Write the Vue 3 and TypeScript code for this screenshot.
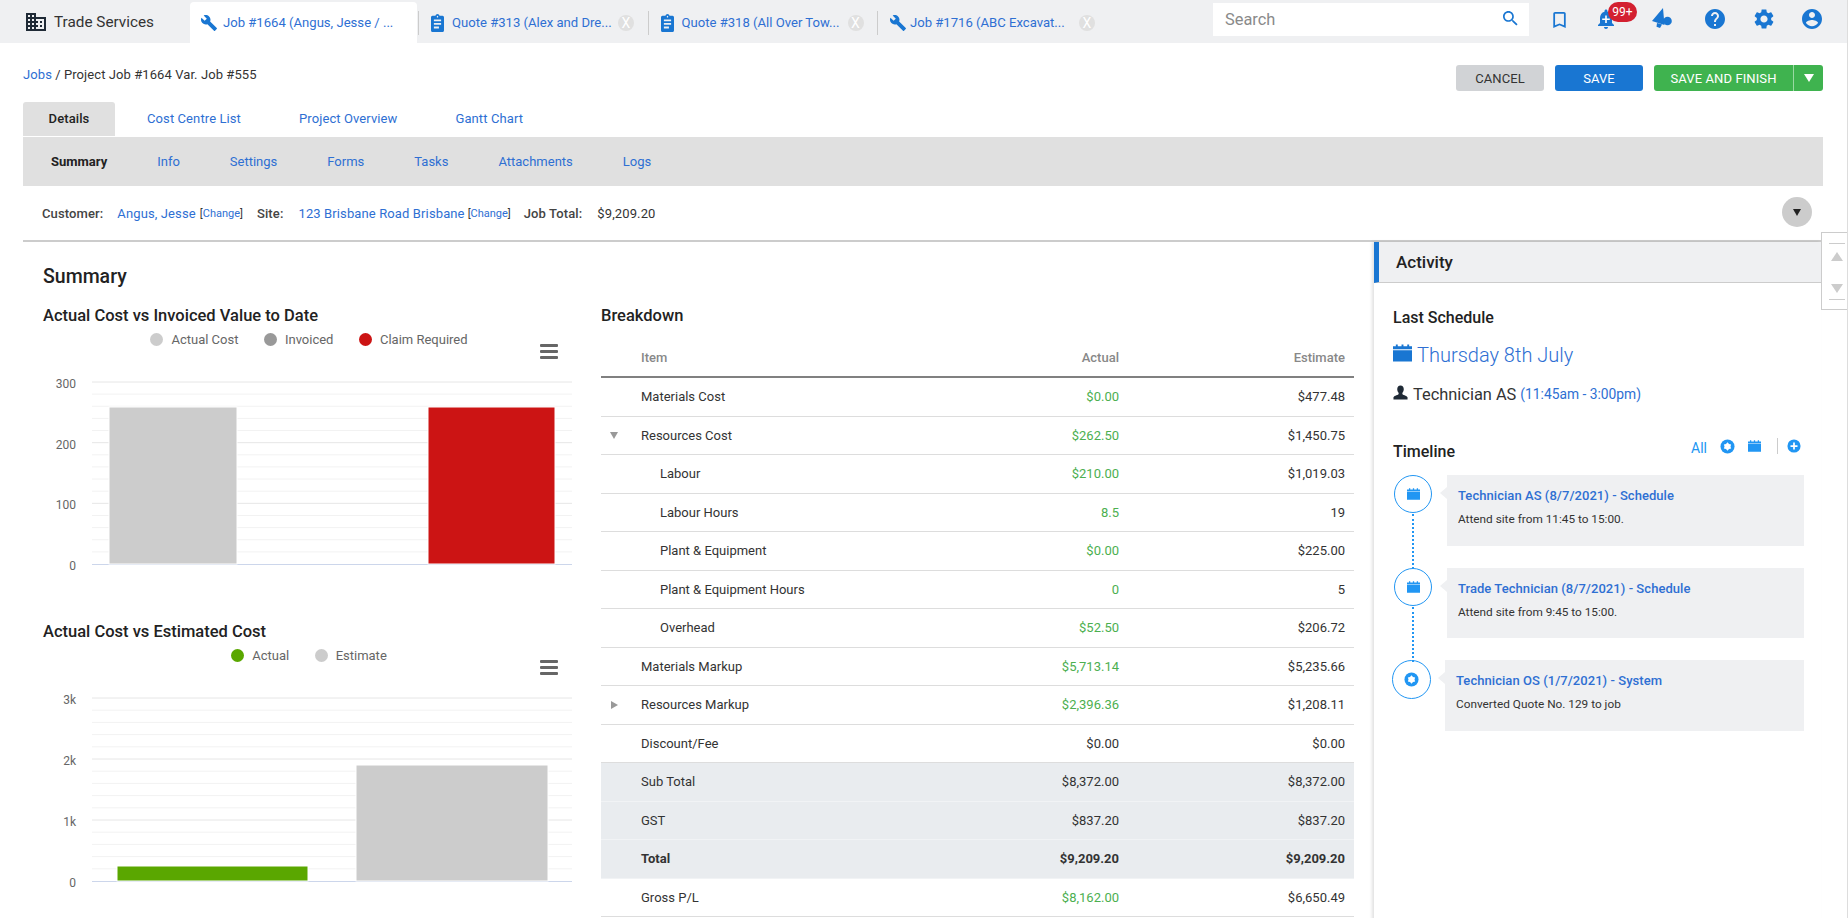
<script setup lang="ts">
interface BreakdownRow {
  name: string
  actual: string
  estimate: string
  green?: boolean
  child?: boolean
  caret?: 'down' | 'right'
  shaded?: boolean
  bold?: boolean
}

interface Bar {
  x: number
  w: number
  y: number
  color: string
}

interface Chart {
  title: string
  legend: { label: string; color: string }[]
  ticks: string[]
  bars: Bar[]
  bottom: number
}

const tabs = [
  { kind: 'job', label: 'Job #1664 (Angus, Jesse / ...', active: true },
  { kind: 'quote', label: 'Quote #313 (Alex and Dre...', active: false },
  { kind: 'quote', label: 'Quote #318 (All Over Tow...', active: false },
  { kind: 'job', label: 'Job #1716 (ABC Excavat...', active: false }
]

const subTabs = ['Info', 'Settings', 'Forms', 'Tasks', 'Attachments', 'Logs']

const charts: Chart[] = [
  {
    title: 'Actual Cost vs Invoiced Value to Date',
    legend: [
      { label: 'Actual Cost', color: '#cccccc' },
      { label: 'Invoiced', color: '#999999' },
      { label: 'Claim Required', color: '#cc1414' }
    ],
    ticks: ['300', '200', '100', '0'],
    bars: [
      { x: 66, w: 128, y: 56, color: '#cccccc' },
      { x: 385, w: 127, y: 56, color: '#cc1414' }
    ],
    bottom: 213
  },
  {
    title: 'Actual Cost vs Estimated Cost',
    legend: [
      { label: 'Actual', color: '#5aa700' },
      { label: 'Estimate', color: '#cccccc' }
    ],
    ticks: ['3k', '2k', '1k', '0'],
    bars: [
      { x: 74, w: 191, y: 199, color: '#5aa700' },
      { x: 313, w: 192, y: 98, color: '#cccccc' }
    ],
    bottom: 214
  }
]

const rows: BreakdownRow[] = [
  { name: 'Materials Cost', actual: '$0.00', estimate: '$477.48', green: true },
  { name: 'Resources Cost', actual: '$262.50', estimate: '$1,450.75', green: true, caret: 'down' },
  { name: 'Labour', actual: '$210.00', estimate: '$1,019.03', green: true, child: true },
  { name: 'Labour Hours', actual: '8.5', estimate: '19', green: true, child: true },
  { name: 'Plant & Equipment', actual: '$0.00', estimate: '$225.00', green: true, child: true },
  { name: 'Plant & Equipment Hours', actual: '0', estimate: '5', green: true, child: true },
  { name: 'Overhead', actual: '$52.50', estimate: '$206.72', green: true, child: true },
  { name: 'Materials Markup', actual: '$5,713.14', estimate: '$5,235.66', green: true },
  { name: 'Resources Markup', actual: '$2,396.36', estimate: '$1,208.11', green: true, caret: 'right' },
  { name: 'Discount/Fee', actual: '$0.00', estimate: '$0.00' },
  { name: 'Sub Total', actual: '$8,372.00', estimate: '$8,372.00', shaded: true },
  { name: 'GST', actual: '$837.20', estimate: '$837.20', shaded: true },
  { name: 'Total', actual: '$9,209.20', estimate: '$9,209.20', shaded: true, bold: true },
  { name: 'Gross P/L', actual: '$8,162.00', estimate: '$6,650.49', green: true }
]

const timeline = [
  { kind: 'schedule', title: 'Technician AS (8/7/2021) - Schedule', body: 'Attend site from 11:45 to 15:00.' },
  { kind: 'schedule', title: 'Trade Technician (8/7/2021) - Schedule', body: 'Attend site from 9:45 to 15:00.' },
  { kind: 'system', title: 'Technician OS (1/7/2021) - System', body: 'Converted Quote No. 129 to job' }
]

const gridLines = (bottom: number) => {
  const step = (bottom - 31) / 15
  return Array.from({ length: 15 }, (_, i) => ({ y: 31 + i * step, major: i % 5 === 0 }))
}

const tickY = (i: number, bottom: number) => 31 + ((bottom - 31) / 3) * i
</script>

<template>
  <div class="page">
    <header class="topbar">
      <div class="brand">
        <svg class="brand-icon" viewBox="2 3 20 18">
          <path fill="#1f2a36" d="M12 7V3H2v18h20V7H12zM6 19H4v-2h2v2zm0-4H4v-2h2v2zm0-4H4V9h2v2zm0-4H4V5h2v2zm4 12H8v-2h2v2zm0-4H8v-2h2v2zm0-4H8V9h2v2zm0-4H8V5h2v2zm10 12h-8v-2h2v-2h-2v-2h2v-2h-2V9h8v10zm-2-8h-2v2h2v-2zm0 4h-2v2h2v-2z" />
        </svg>
        <span>Trade Services</span>
      </div>
      <nav class="tabs">
        <div v-for="tab in tabs" :key="tab.label" class="tab" :class="{ active: tab.active }">
          <svg v-if="tab.kind === 'job'" class="tab-icon" viewBox="1 1 22 22">
            <path fill="#1976d2" d="M22.7 19l-9.1-9.1c.9-2.3.4-5-1.5-6.9-2-2-5-2.4-7.4-1.3L9 6 6 9 1.6 4.7C.4 7.1.9 10.1 2.9 12.1c1.9 1.9 4.6 2.4 6.9 1.5l9.1 9.1c.4.4 1 .4 1.4 0l2.3-2.3c.5-.4.5-1.1.1-1.4z" />
          </svg>
          <svg v-else class="tab-icon quote" viewBox="3 1 18 20" preserveAspectRatio="none">
            <path fill="#1976d2" d="M19 3h-4.18C14.4 1.84 13.3 1 12 1c-1.3 0-2.4.84-2.82 2H5c-1.1 0-2 .9-2 2v14c0 1.1.9 2 2 2h14c1.1 0 2-.9 2-2V5c0-1.1-.9-2-2-2zm-7 0c.55 0 1 .45 1 1s-.45 1-1 1-1-.45-1-1 .45-1 1-1zm2 14H7v-2h7v2zm3-4H7v-2h10v2zm0-4H7V7h10v2z" />
          </svg>
          <span class="tab-label">{{ tab.label }}</span>
          <span v-if="!tab.active" class="tab-close">X</span>
        </div>
      </nav>
      <div class="search">
        <span>Search</span>
        <svg viewBox="3 3 18 18" class="search-icon">
          <path fill="#1976d2" d="M15.5 14h-.79l-.28-.27C15.41 12.59 16 11.11 16 9.5 16 5.91 13.09 3 9.5 3S3 5.91 3 9.5 5.91 16 9.5 16c1.61 0 3.09-.59 4.23-1.57l.27.28v.79l5 4.99L20.49 19l-4.99-5zm-6 0C7.01 14 5 11.99 5 9.5S7.01 5 9.5 5 14 7.01 14 9.5 11.99 14 9.5 14z" />
        </svg>
      </div>
      <div class="top-icons">
        <svg class="ti bookmark" viewBox="5 3 14 18">
          <path fill="#1976d2" d="M17 3H7c-1.1 0-1.99.9-1.99 2L5 21l7-3 7 3V5c0-1.1-.9-2-2-2zm0 15l-5-2.18L7 18V5h10v13z" />
        </svg>
        <div class="bell">
          <svg viewBox="4 2 16 20">
            <path fill="#1976d2" d="M12 22c1.1 0 2-.9 2-2h-4c0 1.1.89 2 2 2zm6-6v-5c0-3.07-1.64-5.64-4.5-6.32V4c0-.83-.67-1.5-1.5-1.5s-1.5.67-1.5 1.5v.68C7.63 5.36 6 7.92 6 11v5l-2 2v1h16v-1l-2-2z" />
            <path fill="#ffffff" d="M11.2 8.5h1.6v3h3v1.6h-3v3h-1.6v-3h-3v-1.6h3z" />
          </svg>
          <span class="badge">99+</span>
        </div>
        <svg class="ti megaphone" viewBox="0 0 20 20">
          <path fill="#1976d2" d="M11 0 L0 13 L12.5 17 Z M5 15 L10 16.5 L8 20 L4.5 18.8 Z" />
          <circle fill="#1976d2" cx="15.5" cy="13" r="4.3" />
        </svg>
        <svg class="ti help" viewBox="2 2 20 20">
          <path fill="#1976d2" d="M12 2C6.48 2 2 6.48 2 12s4.48 10 10 10 10-4.48 10-10S17.52 2 12 2zm1 17h-2v-2h2v2zm2.07-7.75l-.9.92C13.45 12.9 13 13.5 13 15h-2v-.5c0-1.1.45-2.1 1.17-2.83l1.24-1.26c.37-.36.59-.86.59-1.41 0-1.1-.9-2-2-2s-2 .9-2 2H8c0-2.21 1.79-4 4-4s4 1.79 4 4c0 .88-.36 1.68-.93 2.25z" />
        </svg>
        <svg class="ti gear" viewBox="2.5 2 19 20">
          <path fill="#1976d2" d="M19.14 12.94c.04-.3.06-.61.06-.94 0-.32-.02-.64-.07-.94l2.03-1.58c.18-.14.23-.41.12-.61l-1.92-3.32c-.12-.22-.37-.29-.59-.22l-2.39.96c-.5-.38-1.03-.7-1.62-.94l-.36-2.54c-.04-.24-.24-.41-.48-.41h-3.84c-.24 0-.43.17-.47.41l-.36 2.54c-.59.24-1.13.57-1.62.94l-2.39-.96c-.22-.08-.47 0-.59.22L2.74 8.87c-.12.21-.08.47.12.61l2.03 1.58c-.05.3-.09.63-.09.94s.02.64.07.94l-2.03 1.58c-.18.14-.23.41-.12.61l1.92 3.32c.12.22.37.29.59.22l2.39-.96c.5.38 1.03.7 1.62.94l.36 2.54c.05.24.24.41.48.41h3.84c.24 0 .44-.17.47-.41l.36-2.54c.59-.24 1.13-.56 1.62-.94l2.39.96c.22.08.47 0 .59-.22l1.92-3.32c.12-.22.07-.47-.12-.61l-2.01-1.58zM12 15.6c-1.98 0-3.6-1.62-3.6-3.6s1.62-3.6 3.6-3.6 3.6 1.62 3.6 3.6-1.62 3.6-3.6 3.6z" />
        </svg>
        <svg class="ti user" viewBox="2 2 20 20">
          <path fill="#1976d2" d="M12 2C6.48 2 2 6.48 2 12s4.48 10 10 10 10-4.48 10-10S17.52 2 12 2zm0 3c1.66 0 3 1.34 3 3s-1.34 3-3 3-3-1.34-3-3 1.34-3 3-3zm0 14.2c-2.5 0-4.71-1.28-6-3.22.03-1.99 4-3.08 6-3.08 1.99 0 5.97 1.09 6 3.08-1.29 1.94-3.5 3.22-6 3.22z" />
        </svg>
      </div>
    </header>

    <main class="content">
      <div class="crumb-row">
        <div class="crumbs"><a>Jobs</a> / Project Job #1664 Var. Job #555</div>
        <div class="actions">
          <button class="btn cancel">CANCEL</button>
          <button class="btn save">SAVE</button>
          <div class="split">
            <button class="btn finish">SAVE AND FINISH</button>
            <button class="btn caret-btn"><i /></button>
          </div>
        </div>
      </div>

      <div class="main-tabs">
        <span class="main-tab active">Details</span>
        <span class="main-tab first">Cost Centre List</span>
        <span class="main-tab">Project Overview</span>
        <span class="main-tab">Gantt Chart</span>
      </div>
      <div class="sub-tabs">
        <b>Summary</b>
        <a v-for="item in subTabs" :key="item">{{ item }}</a>
      </div>

      <div class="info-row">
        <div class="info">
          <b>Customer:</b>
          <a class="v-customer">Angus, Jesse</a>
          <span class="change">[<a>Change</a>]</span>
          <b class="l-site">Site:</b>
          <a class="v-site">123 Brisbane Road Brisbane</a>
          <span class="change second">[<a>Change</a>]</span>
          <b class="l-total">Job Total:</b>
          <span class="v-total">$9,209.20</span>
        </div>
        <button class="collapse"><i /></button>
      </div>

      <div class="columns">
        <section class="summary">
          <h2>Summary</h2>
          <div class="summary-grid">
            <div class="charts">
              <div v-for="chart in charts" :key="chart.title" class="chart">
                <h3>{{ chart.title }}</h3>
                <div class="legend">
                  <span v-for="item in chart.legend" :key="item.label" class="legend-item">
                    <i :style="{ background: item.color }" />{{ item.label }}
                  </span>
                </div>
                <svg class="chart-menu" viewBox="0 0 18 15">
                  <rect y="0" width="18" height="3" rx="1" fill="#666" />
                  <rect y="6" width="18" height="3" rx="1" fill="#666" />
                  <rect y="12" width="18" height="3" rx="1" fill="#666" />
                </svg>
                <svg class="plot" width="532" height="240" viewBox="0 0 532 240">
                  <line
                    v-for="line in gridLines(chart.bottom)"
                    :key="line.y"
                    x1="49"
                    x2="529"
                    :y1="line.y"
                    :y2="line.y"
                    :stroke="line.major ? '#e6e6e6' : '#f2f2f2'"
                  />
                  <line x1="49" x2="529" :y1="chart.bottom + 0.5" :y2="chart.bottom + 0.5" stroke="#ccd6eb" />
                  <rect
                    v-for="bar in chart.bars"
                    :key="bar.x"
                    :x="bar.x"
                    :y="bar.y"
                    :width="bar.w"
                    :height="chart.bottom - bar.y"
                    :fill="bar.color"
                    stroke="#ffffff"
                  />
                  <text
                    v-for="(tick, i) in chart.ticks"
                    :key="tick"
                    x="33"
                    :y="tickY(i, chart.bottom) + 6"
                    text-anchor="end"
                    class="tick"
                  >{{ tick }}</text>
                </svg>
              </div>
            </div>

            <div class="breakdown">
              <h3>Breakdown</h3>
              <div class="bd-head">
                <span class="bd-name">Item</span>
                <span class="bd-actual">Actual</span>
                <span class="bd-est">Estimate</span>
              </div>
              <div
                v-for="row in rows"
                :key="row.name"
                class="bd-row"
                :class="{ shaded: row.shaded, bold: row.bold }"
              >
                <i v-if="row.caret" class="row-caret" :class="row.caret" />
                <span class="bd-name" :class="{ child: row.child }">{{ row.name }}</span>
                <span class="bd-actual" :class="{ green: row.green }">{{ row.actual }}</span>
                <span class="bd-est">{{ row.estimate }}</span>
              </div>
            </div>
          </div>
        </section>

        <aside class="activity">
          <div class="activity-head">Activity</div>
          <div class="activity-body">
            <h4 class="last">Last Schedule</h4>
            <div class="date">
              <svg class="cal-big" viewBox="0 0 20 18">
                <path fill="#1976d2" d="M0 2h3V0h2v2h4V0h2v2h4V0h2v2h3v3H0zM0 6h20v12H0z" />
              </svg>
              <span>Thursday 8th July</span>
            </div>
            <div class="tech">
              <svg class="person" viewBox="0 0 16 15">
                <path fill="#1f2a36" d="M8 0c2.2 0 3.5 1.8 3.5 4 0 1.6-.7 3-1.500 3.800V9c0 1 4.500 1.500 5.500 3.500V15H.5v-2.500C1.500 10.500 6 10 6 9V7.800C5.200 7 4.500 5.600 4.500 4 4.500 1.800 5.800 0 8 0z" />
              </svg>
              <span>Technician AS</span>
              <a>(11:45am - 3:00pm)</a>
            </div>
            <div class="timeline-head">
              <h4>Timeline</h4>
              <div class="filters">
                <a>All</a>
                <svg class="f-badge" viewBox="0 0 16 16">
                  <circle cx="8" cy="8" r="7.5" fill="#2196f3" />
                  <path fill="#fff" d="M8 3.5L9.6 5.23 11.9 5.75 11.2 8 11.9 10.25 9.6 10.77 8 12.5 6.4 10.77 4.1 10.25 4.8 8 4.1 5.75 6.4 5.23Z" />
                </svg>
                <svg class="f-cal" viewBox="0 0 20 18">
                  <path fill="#2196f3" d="M0 2h3V0h2v2h4V0h2v2h4V0h2v2h3v3H0zM0 6h20v12H0z" />
                </svg>
                <span class="f-sep" />
                <svg class="f-plus" viewBox="0 0 16 16">
                  <circle cx="8" cy="8" r="7.5" fill="#2196f3" />
                  <path fill="#fff" d="M7 4h2v3h3v2H9v3H7V9H4V7h3z" />
                </svg>
              </div>
            </div>
            <ul class="timeline">
              <li v-for="(item, i) in timeline" :key="item.title" class="t-item" :class="item.kind">
                <div class="t-node">
                  <svg v-if="item.kind === 'schedule'" class="t-cal" viewBox="0 0 20 18">
                    <path fill="#2196f3" d="M0 2h3V0h2v2h4V0h2v2h4V0h2v2h3v3H0zM0 6h20v12H0z" />
                  </svg>
                  <svg v-else class="t-badge" viewBox="0 0 16 16">
                    <circle cx="8" cy="8" r="7.5" fill="#2196f3" />
                    <path fill="#fff" d="M8 3.5L9.6 5.23 11.9 5.75 11.2 8 11.9 10.25 9.6 10.77 8 12.5 6.4 10.77 4.1 10.25 4.8 8 4.1 5.75 6.4 5.23Z" />
                  </svg>
                  <span v-if="i < timeline.length - 1" class="t-line" />
                </div>
                <div class="t-card">
                  <a>{{ item.title }}</a>
                  <p>{{ item.body }}</p>
                </div>
              </li>
            </ul>
          </div>
        </aside>
      </div>
    </main>

    <div class="scroller">
      <i class="up" />
      <i class="down" />
    </div>
  </div>
</template>

<style>
html,
body {
  margin: 0;
  overflow: hidden;
}
</style>

<style scoped>
.page {
  position: relative;
  width: 1848px;
  height: 918px;
  overflow: hidden;
  background: #fff;
  font-family: Roboto, 'Liberation Sans', sans-serif;
  font-size: 13px;
  color: #333;
  box-sizing: border-box;
  border-right: 1px solid #ddd;
}

a {
  color: #2e6fd3;
}

h2,
h3,
h4,
p,
ul {
  margin: 0;
  padding: 0;
  font-weight: 500;
}

button {
  font-family: inherit;
  border: 0;
  padding: 0;
}

.topbar {
  display: flex;
  height: 43px;
  background: #eff0f2;
  align-items: stretch;
}

.brand {
  width: 188px;
  box-sizing: border-box;
  padding-left: 26px;
  display: flex;
  align-items: center;
  gap: 8px;
  font-size: 15.3px;
  color: #333;
}

.brand-icon {
  width: 20px;
  height: 18px;
}

.tabs {
  display: flex;
  width: 1025px;
  padding-top: 2px;
  box-sizing: border-box;
}

.tab {
  position: relative;
  width: 229.5px;
  box-sizing: border-box;
  display: flex;
  align-items: center;
  padding: 0 0 0 13px;
  font-size: 13.1px;
  color: #2e6fd3;
}

.tab::before {
  content: '';
  position: absolute;
  left: 0;
  top: 9px;
  height: 24px;
  width: 1px;
  background: #ccc;
}

.tab.active {
  background: #fff;
  border-radius: 4px 4px 0 0;
  margin-left: 2px;
  margin-right: 1px;
  width: 227px;
  padding-left: 11px;
}

.tab.active::before {
  display: none;
}

.tab-icon {
  width: 16px;
  height: 16px;
  margin-right: 6px;
  flex: none;
}

.tab-icon.quote {
  width: 13px;
  height: 18px;
  margin-right: 8px;
}

.tab:last-child .tab-icon {
  margin-right: 4px;
}

.tab-label {
  width: 166px;
  white-space: nowrap;
  overflow: hidden;
  flex: none;
}

.tab.active .tab-label {
  width: 175px;
}

.tab-close {
  width: 16px;
  height: 16px;
  border-radius: 50%;
  background: #e0e0e0;
  color: #fff;
  font-size: 14px;
  line-height: 16px;
  text-align: center;
  flex: none;
}

.tab:last-child .tab-close {
  margin-left: 3px;
}

.search {
  width: 316px;
  height: 33px;
  margin-top: 3px;
  background: #fff;
  display: flex;
  align-items: center;
  justify-content: space-between;
  box-sizing: border-box;
  padding: 0 11px 0 12px;
  font-size: 16.4px;
  color: #8a8a8a;
}

.search-icon {
  width: 15px;
  height: 15px;
  margin-top: -3px;
}

.top-icons {
  position: relative;
  flex: 1;
  display: flex;
  align-items: flex-start;
  padding-left: 24px;
}

.ti {
  flex: none;
}

.bookmark {
  width: 13px;
  height: 16px;
  margin-top: 12px;
}

.bell {
  position: relative;
  width: 18px;
  height: 20px;
  margin: 9px 0 0 31px;
}

.bell svg {
  width: 18px;
  height: 20px;
  display: block;
}

.badge {
  position: absolute;
  left: 11px;
  top: -7px;
  width: 29px;
  height: 20px;
  border-radius: 10px;
  background: #d32030;
  color: #fff;
  font-size: 12px;
  line-height: 20px;
  text-align: center;
}

.megaphone {
  width: 20px;
  height: 20px;
  margin: 8px 0 0 37px;
}

.help {
  width: 20px;
  height: 20px;
  margin: 9px 0 0 33px;
}

.gear {
  width: 20px;
  height: 20px;
  margin: 9px 0 0 29px;
}

.user {
  width: 20px;
  height: 20px;
  margin: 9px 0 0 28px;
}

.content {
  padding: 0 24px 0 23px;
}

.crumb-row {
  display: flex;
  justify-content: space-between;
  align-items: flex-start;
  height: 59px;
}

.crumbs {
  margin-top: 23px;
  line-height: 18px;
  letter-spacing: 0.08px;
  color: #333;
}

.actions {
  display: flex;
  margin-top: 22px;
  gap: 11px;
}

.btn {
  height: 26px;
  width: 88px;
  border-radius: 3px;
  font-size: 13px;
  letter-spacing: 0.1px;
  color: #fff;
}

.btn.cancel {
  background: #d1d3d6;
  color: #333;
}

.btn.save {
  background: #1976d2;
}

.split {
  display: flex;
}

.btn.finish {
  width: 139px;
  background: #3fb34f;
  border-radius: 3px 0 0 3px;
}

.btn.caret-btn {
  width: 30px;
  background: #3fb34f;
  border-radius: 0 3px 3px 0;
  border-left: 1px solid #9ad9a3;
  display: flex;
  align-items: center;
  justify-content: center;
}

.caret-btn i {
  border-left: 5px solid transparent;
  border-right: 5px solid transparent;
  border-top: 8px solid #fff;
}

.main-tabs {
  display: flex;
  height: 35px;
}

.main-tab {
  padding: 0 29px;
  height: 34px;
  line-height: 34px;
  letter-spacing: 0.1px;
  color: #2e6fd3;
}

.main-tab.first {
  margin-left: 3px;
}

.main-tab.active {
  width: 92px;
  box-sizing: border-box;
  padding: 0;
  text-align: center;
  background: #e0e0e0;
  color: #222;
  font-weight: 500;
  border-radius: 3px 3px 0 0;
}

.sub-tabs {
  height: 49px;
  background: #e0e0e0;
  display: flex;
  align-items: center;
  gap: 50px;
  padding-left: 28px;
}

.sub-tabs b {
  font-weight: 700;
  color: #222;
}

.info-row {
  height: 54px;
  display: flex;
  justify-content: space-between;
  align-items: flex-start;
}

.info {
  display: flex;
  margin: 19px 0 0 19px;
  line-height: 18px;
  font-size: 13px;
  letter-spacing: 0.12px;
  white-space: nowrap;
}

.info b {
  font-weight: 500;
  color: #444;
}

.v-customer {
  margin-left: 14px;
}

.change {
  font-size: 11px;
  margin-left: 4px;
  letter-spacing: 0;
}

.change.second {
  margin-left: 3px;
}

.l-site {
  margin-left: 14px;
}

.v-site {
  margin-left: 15px;
}

.l-total {
  margin-left: 13px;
}

.v-total {
  margin-left: 15px;
}

.collapse {
  width: 30px;
  height: 30px;
  border-radius: 50%;
  background: #ccc;
  margin: 11px 11px 0 0;
  display: flex;
  align-items: center;
  justify-content: center;
}

.collapse i {
  border-left: 4px solid transparent;
  border-right: 4px solid transparent;
  border-top: 7px solid #222;
}

.columns {
  display: flex;
  width: 1798px;
  border-top: 2px solid #ccc;
}

.summary {
  width: 1351px;
  flex: none;
  box-sizing: border-box;
  padding: 22px 0 0 20px;
}

h2 {
  font-size: 19.5px;
  line-height: 26px;
  height: 24px;
  color: #222;
}

.summary-grid {
  display: flex;
  margin-top: 15px;
}

.charts {
  width: 558px;
  flex: none;
}

.chart {
  position: relative;
  width: 532px;
  height: 316px;
}

h3 {
  font-size: 16.5px;
  line-height: 25px;
  height: 24px;
  color: #222;
}

.legend {
  display: flex;
  justify-content: center;
  gap: 25.5px;
  height: 24px;
  align-items: center;
  color: #666;
}

.legend-item {
  display: flex;
  align-items: center;
}

.legend-item i {
  width: 13px;
  height: 13px;
  border-radius: 50%;
  margin-right: 8px;
}

.chart-menu {
  position: absolute;
  left: 497px;
  top: 41px;
  width: 18px;
  height: 15px;
}

.plot {
  display: block;
}

.tick {
  font-size: 12px;
  fill: #666;
}

.breakdown {
  width: 753px;
  flex: none;
}

.bd-head,
.bd-row {
  position: relative;
  display: flex;
  align-items: center;
  box-sizing: border-box;
  padding: 0 9px 0 40px;
}

.bd-head {
  margin-top: 12px;
  height: 39px;
  border-bottom: 2px solid #808080;
  font-weight: 500;
  color: #888;
}

.bd-row {
  height: 38.5px;
  border-bottom: 1px solid #ddd;
  color: #333;
}

.bd-row.shaded {
  background: #e9ecef;
  border-bottom-color: #f1f3f5;
}

.bd-row.bold {
  font-weight: 700;
}

.bd-name {
  flex: 1;
}

.bd-name.child {
  padding-left: 19px;
}

.bd-actual {
  width: 120px;
  text-align: right;
}

.bd-est {
  width: 226px;
  text-align: right;
}

.green {
  color: #4caf50;
}

.row-caret {
  position: absolute;
  left: 9px;
  top: 15px;
}

.row-caret.down {
  border-left: 4.5px solid transparent;
  border-right: 4.5px solid transparent;
  border-top: 7px solid #999;
}

.row-caret.right {
  left: 10px;
  border-top: 4.5px solid transparent;
  border-bottom: 4.5px solid transparent;
  border-left: 7px solid #999;
}

.activity {
  width: 447px;
  flex: none;
  min-height: 680px;
  box-shadow: -2px 0 3px rgba(0, 0, 0, 0.12);
}

.activity-head {
  height: 40px;
  box-sizing: content-box;
  border-left: 5px solid #1976d2;
  border-bottom: 1px solid #ccc;
  background: #eff0f2;
  padding-left: 17px;
  line-height: 40px;
  font-size: 17px;
  font-weight: 500;
  color: #222;
}

.activity-body {
  padding: 23px 0 0 19px;
}

h4 {
  font-size: 16px;
  line-height: 24px;
  color: #222;
}

.date {
  display: flex;
  align-items: center;
  height: 28px;
  margin-top: 11px;
  font-size: 20px;
  font-weight: 300;
  color: #2e6fd3;
}

.cal-big {
  width: 19px;
  height: 18px;
  margin: -4px 5px 0 0;
}

.tech {
  display: flex;
  align-items: center;
  height: 24px;
  margin-top: 13px;
  font-size: 16.4px;
  color: #333;
}

.person {
  width: 15px;
  height: 15px;
  margin: -4px 5px 0 0;
}

.tech a {
  font-size: 13.8px;
  margin-left: 4px;
}

.timeline-head {
  display: flex;
  width: 408px;
  justify-content: space-between;
  margin-top: 34px;
}

.filters {
  display: flex;
  align-items: center;
  height: 16px;
  margin-top: -2px;
}

.filters a {
  color: #2196f3;
  font-size: 14px;
  margin-top: 4px;
}

.f-badge {
  width: 15px;
  height: 15px;
  margin-left: 13px;
}

.f-cal {
  width: 13px;
  height: 12px;
  margin-left: 13px;
}

.f-sep {
  width: 1px;
  height: 16px;
  background: #ccc;
  margin-left: 16px;
}

.f-plus {
  width: 14px;
  height: 14px;
  margin-left: 9px;
}

.timeline {
  list-style: none;
  margin-top: 11px;
}

.t-item {
  display: flex;
  align-items: flex-start;
  margin-bottom: 22px;
}

.t-node {
  position: relative;
  width: 38px;
  height: 38px;
  box-sizing: border-box;
  border: 1px solid #2196f3;
  border-radius: 50%;
  display: flex;
  align-items: center;
  justify-content: center;
  margin: 0 15px 0 1px;
  flex: none;
}

.t-item.system .t-node {
  width: 39px;
  height: 39px;
  margin: 0 14px 0 -1px;
}

.t-cal {
  width: 13px;
  height: 12px;
}

.t-badge {
  width: 15px;
  height: 15px;
}

.t-line {
  position: absolute;
  left: 17px;
  top: 38px;
  height: 55px;
  border-left: 2px dotted #2196f3;
}

.t-card {
  position: relative;
  width: 357px;
  height: 70px;
  box-sizing: border-box;
  background: #eff0f2;
  padding: 12px 0 0 11px;
}

.t-item:first-child .t-card,
.t-item.system .t-card {
  height: 71px;
}

.t-item.system .t-card {
  width: 359px;
}

.t-card::before {
  content: '';
  position: absolute;
  left: -7px;
  top: 12px;
  border-top: 6px solid transparent;
  border-bottom: 6px solid transparent;
  border-right: 7px solid #eff0f2;
}

.t-card a {
  display: block;
  font-size: 13px;
  line-height: 18px;
  letter-spacing: 0.05px;
  font-weight: 500;
}

.t-card p {
  margin-top: 5px;
  font-size: 11.8px;
  line-height: 18px;
  font-weight: 400;
  color: #333;
}

.scroller {
  position: absolute;
  left: 1821px;
  top: 232px;
  width: 26px;
  height: 78px;
  box-sizing: border-box;
  border: 1px solid #ccc;
  border-right: 0;
  background: #fff;
}

.scroller i {
  position: absolute;
  left: 9px;
  border-left: 6px solid transparent;
  border-right: 6px solid transparent;
}

.scroller .up {
  top: 19px;
  border-bottom: 9px solid #ccc;
}

.scroller .down {
  top: 51px;
  border-top: 9px solid #ccc;
}

.scroller::before,
.scroller::after {
  content: '';
  position: absolute;
  left: 7px;
  width: 16px;
  height: 1px;
  background: #ccc;
}

.scroller::before {
  top: 10px;
}

.scroller::after {
  top: 66px;
}
</style>
